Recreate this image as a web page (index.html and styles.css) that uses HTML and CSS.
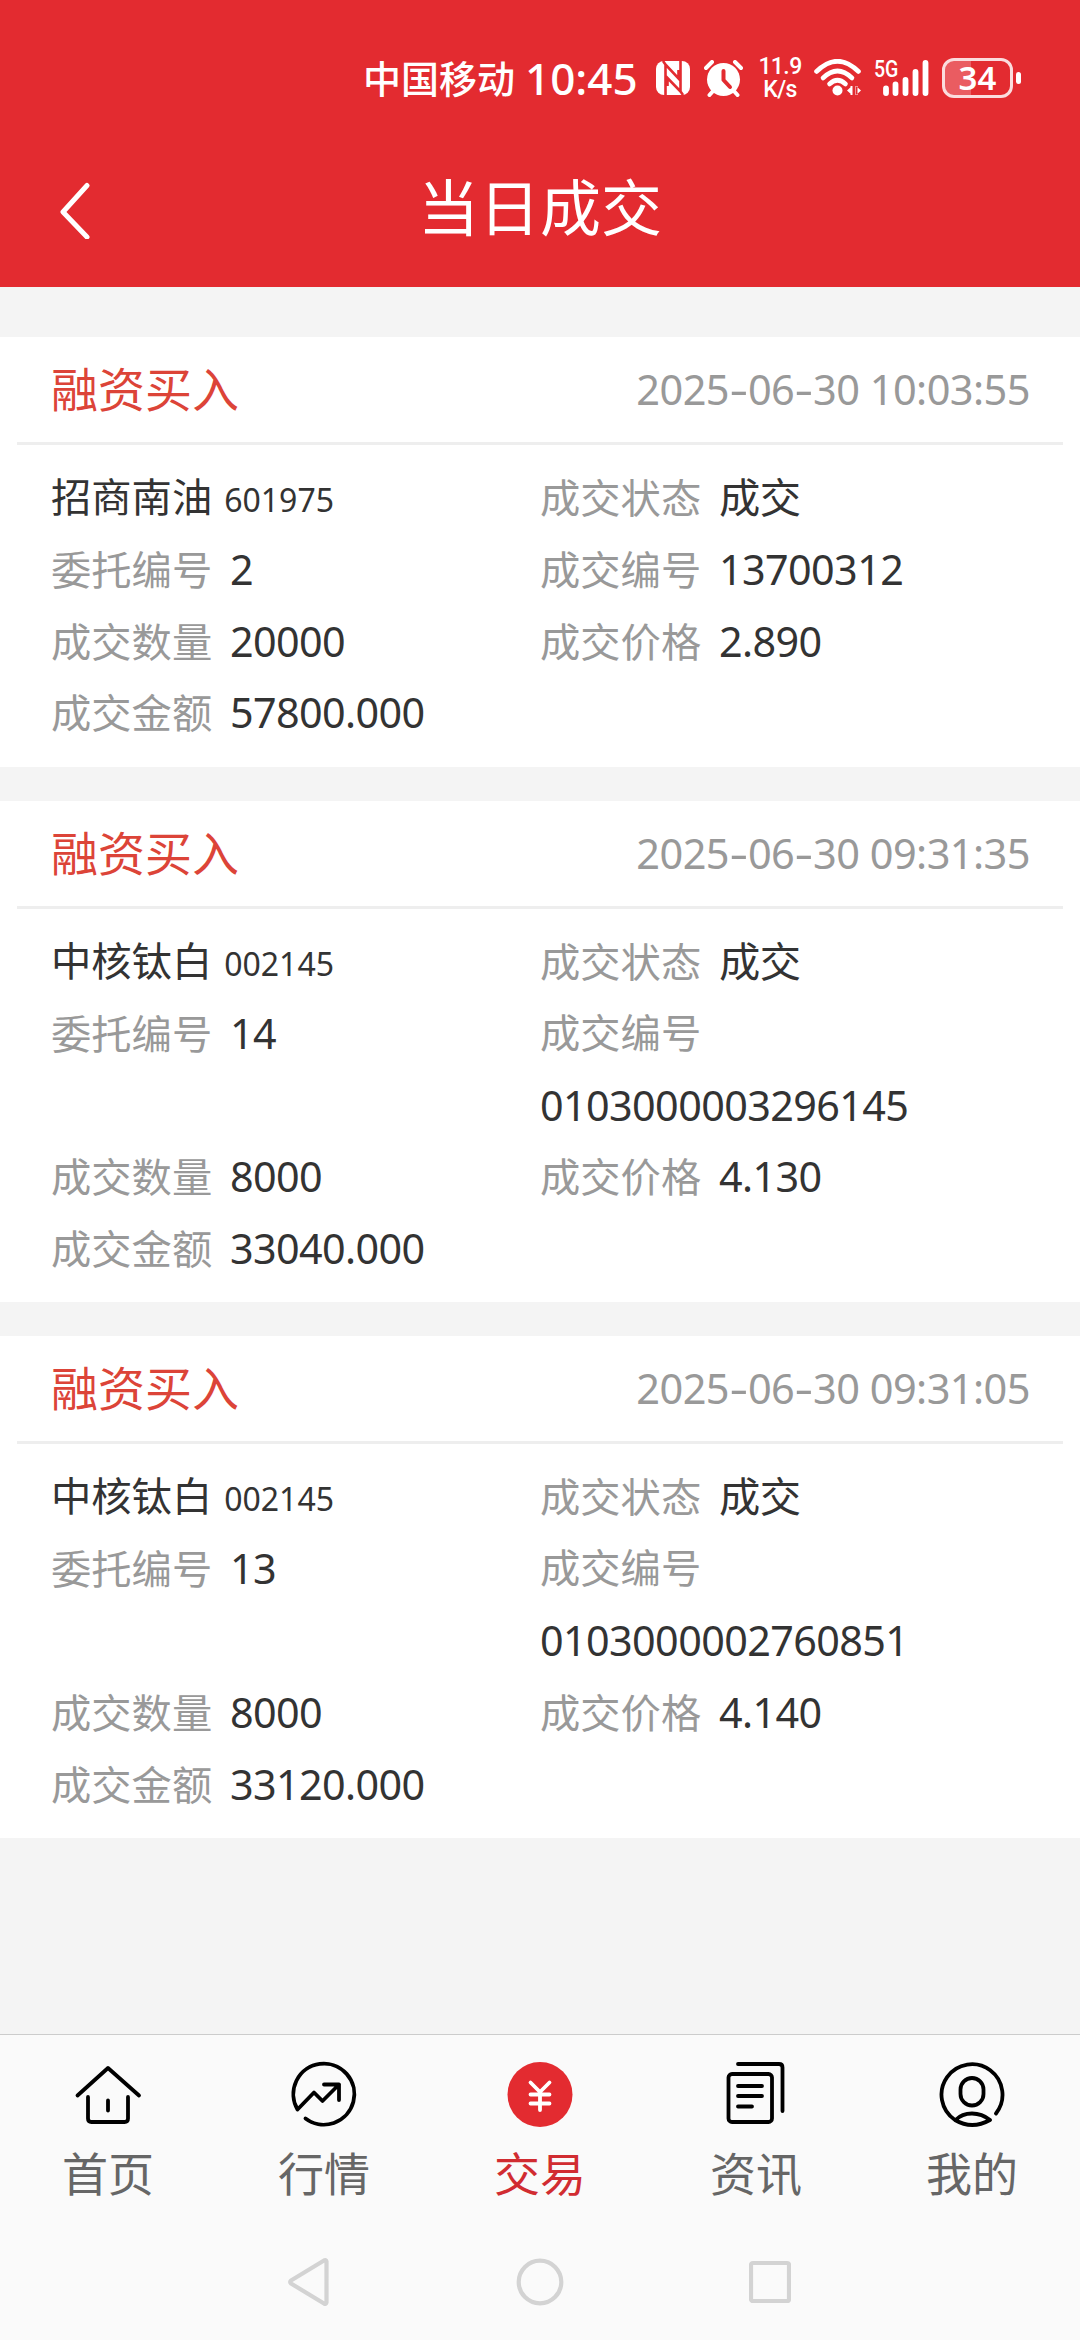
FILE: index.html
```html
<!DOCTYPE html>
<html lang="zh-CN">
<head>
<meta charset="utf-8">
<title>当日成交</title>
<link rel="stylesheet" href="styles.css">
</head>
<body>
<div class="screen">
  <header class="header">
    <div class="status">
      <span class="carrier">中国移动</span>
      <span class="clock">10:45</span>
      <svg class="nfc" width="34" height="34" viewBox="0 0 34 34">
        <rect width="34" height="34" rx="8" fill="#fff"/>
        <path stroke="#e32b30" stroke-width="2.600" fill="none" d="M9.500 34V3.500L22.500 17.500V9M24.500 0V30.500L11.500 17V25M7 0L10.500 5M27 34L23.500 29"/>
      </svg>
      <svg class="alarm" width="39" height="37" viewBox="0 0 39 37">
        <path d="M2 8L8 2M37 8L31 2M10 30L5.500 35M29 30L33.500 35" stroke="#fff" stroke-width="4" stroke-linecap="round"/>
        <circle cx="19.500" cy="19.500" r="16.500" fill="#fff"/>
        <path d="M19.500 11V20L26 27" fill="none" stroke="#e32b30" stroke-width="4" stroke-linecap="round" stroke-linejoin="round"/>
      </svg>
      <span class="speed"><span>11.9</span><span>K/s</span></span>
      <svg class="wifi" width="48" height="38" viewBox="0 0 48 38">
        <g fill="none" stroke="#fff" stroke-width="4.600" stroke-linecap="round">
          <path d="M2.500 12.500Q23.500 -8 44.500 12.500"/>
          <path d="M9 19Q23.500 5 38 19"/>
          <path d="M15.500 25Q23.500 17.500 31.500 25"/>
        </g>
        <circle cx="23.500" cy="31.500" r="5" fill="#fff"/>
        <path fill="#fff" d="M33 31.500L38 27V36ZM47 31.500L42 27V36ZM36.500 27H38.500V36H36.500ZM41.500 27H43.500V36H41.500Z"/>
      </svg>
      <div class="signal">
        <span class="gen">5G</span>
        <svg width="54" height="37" viewBox="0 0 54 37">
          <path d="M11 28.500V33M20.500 24.500V33M30.500 20V33M40.500 12V33M50.500 3V33" stroke="#fff" stroke-width="5.800" stroke-linecap="round"/>
        </svg>
      </div>
      <div class="battery"><span>34</span></div>
      <div class="nub"></div>
    </div>
    <div class="bar">
      <svg class="back" width="34" height="58" viewBox="0 0 34 58"><path d="M30 4.500L6 31L30 56" fill="none" stroke="#fff" stroke-width="5" stroke-linecap="round" stroke-linejoin="round"/></svg>
      <h1 class="title">当日成交</h1>
    </div>
  </header>

  <main class="list">
    <section class="card">
      <div class="card-head"><span class="side">融资买入</span><span class="time">2025<i>-</i>06<i>-</i>30 10:03:55</span></div>
      <div class="grid">
        <div class="cell"><b>招商南油</b><small>601975</small></div>
        <div class="cell"><span>成交状态</span><b>成交</b></div>
        <div class="cell"><span>委托编号</span><b>2</b></div>
        <div class="cell"><span>成交编号</span><b>13700312</b></div>
        <div class="cell"><span>成交数量</span><b>20000</b></div>
        <div class="cell"><span>成交价格</span><b>2.890</b></div>
        <div class="cell"><span>成交金额</span><b>57800.000</b></div>
      </div>
    </section>
    <section class="card">
      <div class="card-head"><span class="side">融资买入</span><span class="time">2025<i>-</i>06<i>-</i>30 09:31:35</span></div>
      <div class="grid">
        <div class="cell"><b>中核钛白</b><small>002145</small></div>
        <div class="cell"><span>成交状态</span><b>成交</b></div>
        <div class="cell"><span>委托编号</span><b>14</b></div>
        <div class="cell wrap"><span>成交编号</span><b>0103000003296145</b></div>
        <div class="cell"><span>成交数量</span><b>8000</b></div>
        <div class="cell"><span>成交价格</span><b>4.130</b></div>
        <div class="cell"><span>成交金额</span><b>33040.000</b></div>
      </div>
    </section>
    <section class="card">
      <div class="card-head"><span class="side">融资买入</span><span class="time">2025<i>-</i>06<i>-</i>30 09:31:05</span></div>
      <div class="grid">
        <div class="cell"><b>中核钛白</b><small>002145</small></div>
        <div class="cell"><span>成交状态</span><b>成交</b></div>
        <div class="cell"><span>委托编号</span><b>13</b></div>
        <div class="cell wrap"><span>成交编号</span><b>0103000002760851</b></div>
        <div class="cell"><span>成交数量</span><b>8000</b></div>
        <div class="cell"><span>成交价格</span><b>4.140</b></div>
        <div class="cell"><span>成交金额</span><b>33120.000</b></div>
      </div>
    </section>
  </main>

  <nav class="tabs">
    <a class="tab">
      <svg width="68" height="68" viewBox="0 0 68 68"><path d="M3.500 35.500L34 8L65 35.500M14 37V58.500Q14 62 17.500 62H50.500Q54 62 54 58.500V37M34 40.500V50.500"/></svg>
      <span>首页</span>
    </a>
    <a class="tab">
      <svg width="68" height="68" viewBox="0 0 68 68"><path d="M15.500 58.500A30.500 30.500 0 1 0 7.500 49.500L24 32.500L32.500 41L49 24.500M34 24.500H49V40"/></svg>
      <span>行情</span>
    </a>
    <a class="tab active">
      <svg width="68" height="68" viewBox="0 0 68 68"><circle cx="34" cy="34.500" r="32.500" fill="#e32b30" stroke="none"/><path stroke="#fff" d="M24.500 22.500L34 32L43.500 22.500M34 32V50M24.500 34.500H43.500M24.500 43.500H43.500"/></svg>
      <span>交易</span>
    </a>
    <a class="tab">
      <svg width="68" height="68" viewBox="0 0 68 68"><rect x="6.500" y="14" width="43.500" height="48" rx="3.500"/><path d="M16 4H57Q60.500 4 60.500 7.500V51M16 26H40M16 36H40M16 46.500H30"/></svg>
      <span>资讯</span>
    </a>
    <a class="tab">
      <svg width="68" height="68" viewBox="0 0 68 68"><path d="M58 53.500A30.500 30.500 0 1 0 17 60Q34 70 52 60Q44 53.500 34 53.500Q24 53.500 17.500 60"/><rect x="22.500" y="18" width="23" height="27.500" rx="11.500"/></svg>
      <span>我的</span>
    </a>
  </nav>
  <div class="sysnav">
    <svg width="42" height="48" viewBox="0 0 42 48"><path d="M38.500 3.500V44.500Q38 46.500 36 45.500L3 25.500Q1.500 24 3 22.500L36 2.500Q38 1.500 38.500 3.500Z"/></svg>
    <svg width="48" height="48" viewBox="0 0 48 48"><circle cx="24" cy="24" r="21.300"/></svg>
    <svg width="42" height="48" viewBox="0 0 42 48"><rect x="2" y="5" width="38" height="38" rx="2"/></svg>
  </div>
</div>
</body>
</html>
```

FILE: styles.css
```css
* { box-sizing: border-box; }

body {
  margin: 0;
  font-family: "Noto Sans", "Noto Sans CJK SC", sans-serif;
  color: #333;
  background: #f4f4f4;
}

.screen {
  width: 1080px;
  height: 2340px;
  display: flex;
  flex-direction: column;
  overflow: hidden;
}

.header {
  height: 287px;
  background: #e32b30;
  color: #fff;
}

.status {
  height: 156px;
  padding-right: 59px;
  display: flex;
  justify-content: flex-end;
  align-items: center;
  line-height: 1;
  white-space: nowrap;
}
.status svg { display: block; }
.carrier { font-size: 38px; font-weight: 500; width: 152px; }
.clock { font-size: 44px; font-weight: 500; width: 113px; margin-left: 10px; }
.nfc { margin-left: 18px; }
.alarm { margin-left: 14px; }
.speed {
  width: 48px;
  margin-left: 13px;
  display: flex;
  flex-direction: column;
  align-items: center;
  font: 500 23px/23px Roboto, sans-serif;
  letter-spacing: -.6px;
}
.wifi { margin-left: 10px; }
.signal { position: relative; margin-left: 13px; }
.gen {
  position: absolute;
  left: -1px;
  top: 0;
  font: 500 23px/20px Roboto, sans-serif;
  transform: scaleX(.85);
  transform-origin: left;
}
.battery {
  width: 71px;
  height: 40px;
  margin-left: 13px;
  border: 3px solid #fbdcdd;
  border-radius: 12px;
  background: linear-gradient(90deg, #ea5c61 26px, transparent 26px);
  text-align: center;
  font: 600 33px/34px "Noto Sans", sans-serif;
}
.nub { width: 5px; height: 12px; margin-left: 3px; border-radius: 3px; background: #fff; }

.bar {
  height: 131px;
  padding-bottom: 24px;
  display: grid;
  grid-template-columns: 150px 1fr 150px;
  align-items: center;
}
.back { margin-left: 57px; }
.title {
  margin: 0;
  padding-bottom: 3px;
  text-align: center;
  font-size: 61px;
  font-weight: 400;
  line-height: 104px;
}

.list {
  flex: 1;
  padding-top: 50px;
  display: flex;
  flex-direction: column;
  gap: 34px;
}
.card { background: #fff; padding: 0 17px 18.600px; }
.card-head {
  height: 108px;
  padding: 0 33px 0 34px;
  border-bottom: 3px solid #eee;
  display: flex;
  justify-content: space-between;
  align-items: center;
  line-height: 1;
}
.side { font-size: 47px; color: #dc4438; }
.time { font-size: 41.500px; letter-spacing: -.55px; color: #999; }
.time i {
  display: inline-block;
  font-style: normal;
  margin: 0 3px;
  transform: scaleX(1.4);
}

.grid {
  padding: 16px 0 0 34px;
  display: grid;
  grid-template-columns: 489px 1fr;
}
.cell {
  height: 71.800px;
  display: flex;
  align-items: baseline;
  align-content: flex-start;
  font-size: 40.300px;
  line-height: 72px;
  white-space: nowrap;
}
.cell span { width: 161px; margin-right: 18px; color: #999; }
.cell b { font-weight: 400; font-size: 41.300px; letter-spacing: -.6px; }
.cell b:first-child { font-size: 40.300px; letter-spacing: 0; }
.cell small { font-size: 32px; line-height: 1; margin-left: 12px; }
.wrap { height: 143.600px; flex-wrap: wrap; }
.wrap span { margin-right: 180px; }

.tabs {
  height: 187px;
  padding-top: 25px;
  border-top: 1px solid #ccc;
  background: #fafafa;
  display: grid;
  grid-template-columns: repeat(5, 1fr);
}
.tab {
  display: flex;
  flex-direction: column;
  align-items: center;
  font-size: 46px;
  line-height: 90px;
  color: #666;
}
.tab svg { fill: none; stroke: #000; stroke-width: 3.800; stroke-linecap: round; stroke-linejoin: round; }
.active { color: #d12c31; }

.sysnav {
  height: 119px;
  padding: 37px 289px 0 288px;
  background: #fafafa;
  display: flex;
  justify-content: space-between;
}
.sysnav svg { fill: none; stroke: #d3d3d3; stroke-width: 4.200; stroke-linejoin: round; }
```
